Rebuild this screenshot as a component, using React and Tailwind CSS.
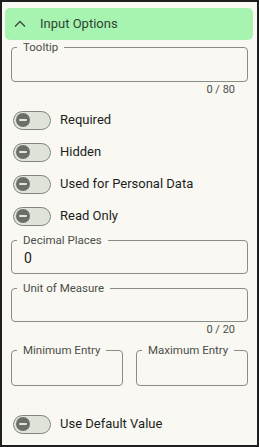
import { useState } from 'react';

const Toggle = ({ label }) => {
  return (
    <div className="flex h-[32px] items-center">
      <div className="ml-[11px] flex h-[19px] w-[38px] items-center rounded-full border-[1.5px] border-[#80847c] bg-[#dee4da] pl-[2px]">
        <div className="flex h-[14px] w-[14px] items-center justify-center rounded-full bg-[#6b6e68]">
          <div className="h-[2px] w-[8px] rounded bg-[#e4e6e1]" />
        </div>
      </div>
      <span className="ml-[9px] text-[13px] text-[#1d1e1b]">{label}</span>
    </div>
  );
};

const Field = ({ label, value, className }) => {
  return (
    <fieldset className={`rounded-[4px] border border-[#8b8c87] ${className}`}>
      <legend className="ml-[5px] px-[6px] text-[11.5px] leading-[12px] text-[#4b4e48]">{label}</legend>
      {value && <div className="pl-[12px] pt-[4px] text-[14px] leading-[16px] text-[#1d1e1b]">{value}</div>}
    </fieldset>
  );
};

export default function App() {
  const [open] = useState(true);

  return (
    <div className="flex h-[447px] w-[259px] flex-col border-2 border-[#1f1f1f] bg-[#f9f8f3] font-['Roboto',sans-serif]">
      {/* header */}
      <div className="ml-[3px] mr-[4px] mt-[6px] flex h-[32px] items-center rounded-[5px] bg-[#a7f3b0]">
        <svg className="ml-[8px]" width="14" height="10" viewBox="0 0 14 10" fill="none">
          <path d="M2 7.5 L7 2.5 L12 7.5" stroke="#3e4a3f" strokeWidth="1.4" />
        </svg>
        <span className="ml-[13px] text-[13px] text-[#2f4533]">Input Options</span>
      </div>

      {open && (
        <div className="flex flex-col">
          <Field label="Tooltip" className="mx-[9px] mt-[1px] h-[41px]" />
          <div className="mt-[2px] h-[12px] pr-[22px] text-right text-[11px] leading-[12px] text-[#4b4e48]">0 / 80</div>

          <div className="mt-[8px] flex flex-col">
            <Toggle label="Required" />
            <Toggle label="Hidden" />
            <Toggle label="Used for Personal Data" />
            <Toggle label="Read Only" />
          </div>

          <Field label="Decimal Places" value="0" className="mx-[9px] mt-[2px] h-[40px]" />
          <Field label="Unit of Measure" className="mx-[9px] mt-[8px] h-[40px]" />
          <div className="mt-[2px] h-[12px] pr-[22px] text-right text-[11px] leading-[12px] text-[#4b4e48]">0 / 20</div>

          <div className="mx-[9px] mt-[8px] flex gap-[13px]">
            <Field label="Minimum Entry" className="h-[42px] flex-1" />
            <Field label="Maximum Entry" className="h-[42px] flex-1" />
          </div>

          <div className="mt-[22px]">
            <Toggle label="Use Default Value" />
          </div>
        </div>
      )}
    </div>
  );
}
